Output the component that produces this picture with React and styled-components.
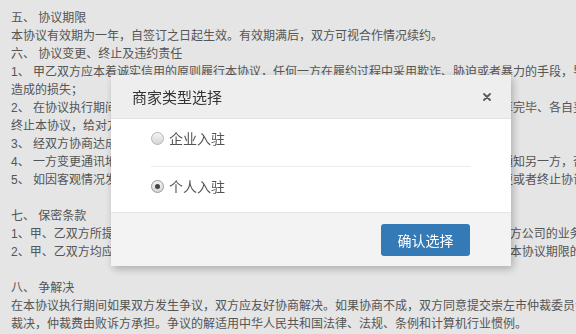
import React, { useState } from 'react'
import styled, { createGlobalStyle } from 'styled-components'

const GlobalStyle = createGlobalStyle`
  html, body {
    margin: 0;
    padding: 0;
    background: #ffffff;
    overflow: hidden;
  }
  body {
    font-family: "Liberation Sans", "Noto Sans CJK SC", sans-serif;
  }
`

const Agreement = styled.div`
  width: 760px;
  padding: 9px 11px;
  color: #606060;
  font-size: 12px;
  line-height: 18px;

  & p {
    margin: 0;
    white-space: nowrap;
    min-height: 18px;
  }
`

const Backdrop = styled.div`
  position: fixed;
  inset: 0;
  background: rgba(0, 0, 0, 0.1);
`

const Dialog = styled.div`
  position: absolute;
  left: 111px;
  top: 75px;
  width: 400px;
  background: #ffffff;
  box-shadow: 2px 3px 8px rgba(0, 0, 0, 0.25);
  font-family: "Liberation Sans", "Noto Sans CJK SC", sans-serif;
`

const Header = styled.div`
  height: 43px;
  display: flex;
  align-items: center;
  justify-content: space-between;
  padding: 0 20px 0 21px;
  background: #eeeeee;
  border-bottom: 1px solid #e2e2e2;
`

const Title = styled.h4`
  margin: 0;
  font-size: 15px;
  font-weight: normal;
  color: #333333;
`

const Close = styled.button`
  border: 0;
  background: none;
  padding: 0;
  width: 8px;
  height: 8px;
  display: flex;
  cursor: pointer;
`

const Body = styled.div`
  padding: 0 40px 7px;
`

const Option = styled.label`
  display: flex;
  align-items: center;
  height: 38px;
  gap: 5px;
  font-size: 14px;
  color: #555555;
  cursor: pointer;
`

const Divider = styled.div`
  height: 1px;
  background: #ececec;
  margin-top: 9px;
`

const Radio = styled.span`
  width: 11px;
  height: 11px;
  border-radius: 50%;
  border: 1px solid ${p => (p.$checked ? '#9a9a9a' : '#b5b5b5')};
  background: linear-gradient(#f4f4f4, #d6d6d6);
  display: flex;
  align-items: center;
  justify-content: center;
  flex-shrink: 0;

  &::after {
    content: '';
    width: 5px;
    height: 5px;
    border-radius: 50%;
    background: ${p => (p.$checked ? '#454545' : 'transparent')};
  }
`

const Footer = styled.div`
  display: flex;
  justify-content: flex-end;
  padding: 11px 41px 10px;
  background: #f3f3f3;
  border-top: 1px solid #e5e5e5;
`

const Button = styled.button`
  width: 89px;
  height: 32px;
  border: 0;
  border-radius: 3px;
  background: #337ab7;
  color: #ffffff;
  font-size: 14px;
  font-family: inherit;
  cursor: pointer;
`

const lines = [
  '五、 协议期限',
  '本协议有效期为一年，自签订之日起生效。有效期满后，双方可视合作情况续约。',
  '六、 协议变更、终止及违约责任',
  '1、 甲乙双方应本着诚实信用的原则履行本协议，任何一方在履约过程中采用欺诈、胁迫或者暴力的手段，导致对方遭受损失的，应赔偿对方因此',
  '造成的损失；',
  '2、 在协议执行期间，如一方提出终止合作，应提前三十日书面通知对方，并在双方的款项结算完毕、各自妥善处理相关事务后',
  '终止本协议，给对方造成损失的，应承担相应的赔偿责任。',
  '3、 经双方协商达成一致意见的，可以书面形式变更或终止本协议。',
  '4、 一方变更通讯地址或联系方式的，应在变更之日起三日内将变更后的地址及联系方式书面通知另一方，否则由此造成的损失由变更方承担。',
  '5、 如因客观情况发生重大变化，致使本协议无法继续履行的，双方可以通过友好协商方式变更或者终止协议。',
  '',
  '七、 保密条款',
  '1、甲、乙双方所提供的一切资料及信息均属商业秘密，未经对方书面同意，不得向他人泄露对方公司的业务信息及技术资料。',
  '2、甲、乙双方均应对本协议内容及履行过程中知悉的对方商业秘密予以保密，该保密义务不因本协议期限的届满而终止。',
  '',
  '八、 争解决',
  '在本协议执行期间如果双方发生争议，双方应友好协商解决。如果协商不成，双方同意提交崇左市仲裁委员会仲裁',
  '裁决，仲裁费由败诉方承担。争议的解适用中华人民共和国法律、法规、条例和计算机行业惯例。',
]

const options = ['企业入驻', '个人入驻']

export default function App() {
  const [type, setType] = useState(1)

  return (
    <>
      <GlobalStyle />
      <Agreement>
        {lines.map((line, i) => (
          <p key={i}>{line}</p>
        ))}
      </Agreement>
      <Backdrop>
        <Dialog>
          <Header>
            <Title>商家类型选择</Title>
            <Close aria-label="关闭">
              <svg width="8" height="8" viewBox="0 0 8 8">
                <path d="M1 1 L7 7 M7 1 L1 7" stroke="#5a5a5a" strokeWidth="1.8" strokeLinecap="round" />
              </svg>
            </Close>
          </Header>
          <Body>
            {options.map((label, i) => (
              <React.Fragment key={label}>
                {i > 0 && <Divider />}
                <Option onClick={() => setType(i)}>
                  <Radio $checked={type === i} />
                  {label}
                </Option>
              </React.Fragment>
            ))}
          </Body>
          <Footer>
            <Button>确认选择</Button>
          </Footer>
        </Dialog>
      </Backdrop>
    </>
  )
}
